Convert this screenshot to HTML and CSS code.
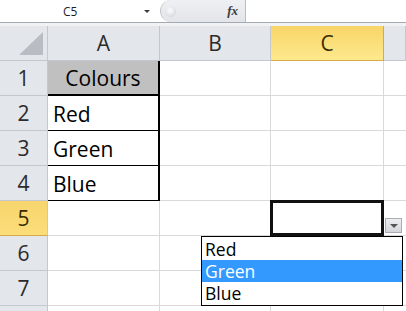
FILE: index.html
```html
<!DOCTYPE html>
<html>
<head>
    <title>Data Validation List</title>
    <link rel="stylesheet" href="styles.css">
</head>
<body>
    <div class="formula-bar">
        <div class="name-box">
            <span class="name">C5</span>
            <span class="name-arrow"></span>
        </div>
        <div class="fx-panel">
            <span class="grip"></span>
            <span class="fx">fx</span>
        </div>
        <div class="formula-input"></div>
    </div>
    <div class="gap"></div>
    <div class="sheet">
        <div class="corner">
            <svg width="48" height="34" viewBox="0 0 48 34"><polygon points="43,6 43,29 19,29" fill="#b9bdc3"/></svg>
        </div>
        <div class="col-head">A</div>
        <div class="col-head">B</div>
        <div class="col-head active">C</div>
        <div class="col-head last"></div>

        <div class="row-head">1</div>
        <div class="cell title">Colours</div>
        <div class="cell"></div><div class="cell"></div><div class="cell last"></div>

        <div class="row-head">2</div>
        <div class="cell boxed">Red</div>
        <div class="cell"></div><div class="cell"></div><div class="cell last"></div>

        <div class="row-head">3</div>
        <div class="cell boxed">Green</div>
        <div class="cell"></div><div class="cell"></div><div class="cell last"></div>

        <div class="row-head">4</div>
        <div class="cell boxed">Blue</div>
        <div class="cell"></div><div class="cell"></div><div class="cell last"></div>

        <div class="row-head active">5</div>
        <div class="cell"></div>
        <div class="cell"></div>
        <div class="cell selected">
            <div class="selection"></div>
            <div class="list-button"><span></span></div>
            <ul class="list">
                <li>Red</li>
                <li class="hover">Green</li>
                <li>Blue</li>
            </ul>
        </div>
        <div class="cell last"></div>

        <div class="row-head">6</div>
        <div class="cell"></div><div class="cell"></div><div class="cell"></div><div class="cell last"></div>

        <div class="row-head">7</div>
        <div class="cell"></div><div class="cell"></div><div class="cell"></div><div class="cell last"></div>

        <div class="row-head"></div>
        <div class="cell"></div><div class="cell"></div><div class="cell"></div><div class="cell last"></div>
    </div>
</body>
</html>
```

FILE: styles.css
```css
body, html {
    margin: 0;
    padding: 0;
    width: 100%;
    height: 100%;
    overflow: hidden;
    background-color: #fff;
    font-family: "Open Sans", Lato, sans-serif;
}

/* formula bar */
.formula-bar {
    display: flex;
    height: 22px;
    border-bottom: 1px solid #a3aab3;
    background-color: #fff;
}
.name-box {
    width: 160px;
    display: flex;
    align-items: center;
}
.name {
    margin-left: 63px;
    font-size: 12px;
    color: #1e1e1e;
}
.name-arrow {
    margin-left: 67px;
    width: 0;
    height: 0;
    border-left: 3px solid transparent;
    border-right: 3px solid transparent;
    border-top: 3px solid #3c3c3c;
}
.fx-panel {
    width: 84px;
    display: flex;
    align-items: center;
    border-radius: 11px 0 0 11px;
    background: linear-gradient(#eef0f3, #e2e5e9);
    border-left: 1px solid #c4c9cf;
    border-right: 1px solid #b8bec6;
}
.grip {
    width: 11px;
    height: 11px;
    margin-left: 4px;
    border-radius: 50%;
    background: radial-gradient(circle at 45% 40%, #f4f5f7 20%, #d6dadf 75%);
}
.fx {
    margin-left: auto;
    margin-right: 7px;
    font-family: "Liberation Serif", serif;
    font-style: italic;
    font-weight: bold;
    font-size: 13px;
    color: #3b3b3b;
}
.formula-input {
    flex: 1;
}
.gap {
    height: 3px;
    background-color: #f1f2f4;
}

/* grid */
.sheet {
    display: grid;
    grid-template-columns: 48px 112px 111px 113px 1fr;
    grid-template-rows: 35px repeat(8, 35px);
}
.corner {
    background-color: #e3e6ea;
    border-right: 1px solid #c3c8ce;
    border-bottom: 1px solid #c3c8ce;
}
.corner svg {
    display: block;
}
.col-head, .row-head {
    background-color: #e3e6ea;
    color: #2b2b2b;
    font-size: 21px;
    display: flex;
    align-items: center;
    justify-content: center;
    box-sizing: border-box;
    border-right: 1px solid #c3c8ce;
    border-bottom: 1px solid #c3c8ce;
}
.col-head.active {
    background: linear-gradient(#f9d568, #fde98d);
    border-right-color: #d6a94a;
    border-bottom-color: #d6a94a;
    color: #3a2c00;
}
.row-head.active {
    background: linear-gradient(#f8d56d, #fbdd7a);
    border-bottom-color: #d6a94a;
    color: #3a2c00;
}
.cell {
    box-sizing: border-box;
    border-right: 1px solid #d9d9d9;
    border-bottom: 1px solid #d9d9d9;
    font-size: 21px;
    line-height: 1.2;
    color: #000;
    display: flex;
    align-items: flex-end;
    padding: 0 0 3px 5px;
}
.cell.last {
    border-right: none;
}
.cell.title {
    background-color: #c0c0c0;
    justify-content: center;
    padding-left: 0;
    border-right: 2px solid #000;
    border-bottom: 2px solid #000;
}
.cell.boxed {
    border-right: 2px solid #000;
    border-bottom: 1px solid #000;
}

/* selected cell with validation list */
.cell.selected {
    position: relative;
}
.selection {
    position: absolute;
    top: -1px;
    left: -1px;
    right: -1px;
    bottom: -1px;
    border: 3px solid #111;
}
.list-button {
    position: absolute;
    top: 17px;
    left: 114px;
    width: 15px;
    height: 13px;
    border: 1px solid #a9adb3;
    background: linear-gradient(#eceef1, #d3d7dc);
    display: flex;
    align-items: center;
    justify-content: center;
}
.list-button span {
    width: 0;
    height: 0;
    border-left: 4px solid transparent;
    border-right: 4px solid transparent;
    border-top: 4px solid #555;
}
.list {
    position: absolute;
    top: 35px;
    left: -70px;
    width: 200px;
    margin: 0;
    padding: 1px 0;
    list-style: none;
    background-color: #fff;
    border: 1px solid #000;
    z-index: 2;
}
.list li {
    height: 22px;
    line-height: 22px;
    padding-left: 3px;
    font-size: 17.5px;
    color: #000;
}
.list li.hover {
    background-color: #3399ff;
    color: #fff;
}
```
